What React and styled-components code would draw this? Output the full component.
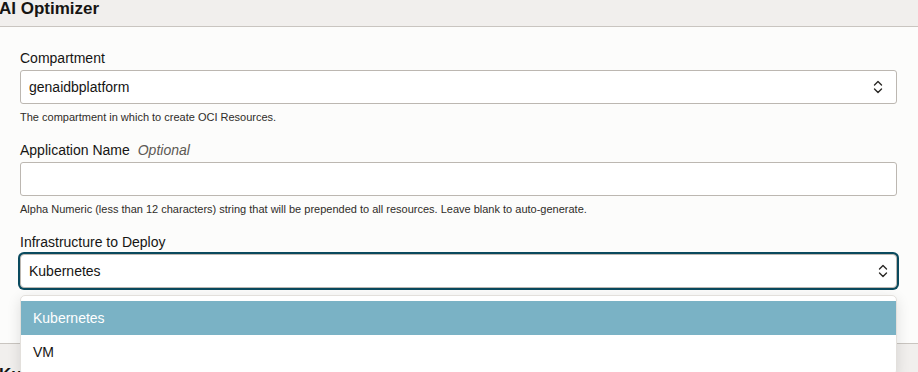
import React from 'react'
import styled, {createGlobalStyle} from 'styled-components'

const GlobalStyle = createGlobalStyle`
  html, body {
    margin: 0;
    padding: 0;
    background: #fcfcfb;
    font-family: "Liberation Sans", Arial, sans-serif;
    color: #161513;
    overflow: hidden;
  }
`

const Page = styled.div`
  width: 918px;
  height: 372px;
  overflow: hidden;
`

const SectionHeader = styled.div`
  height: 26px;
  background: #f1efed;
  border-bottom: 1px solid #c9c5c0;
  border-top: ${(p) => (p.top ? 'none' : '1px solid #c9c5c0')};
  padding-top: ${(p) => (p.top ? '0' : '22px')};
  box-sizing: content-box;
`

const SectionTitle = styled.h2`
  margin: 0 0 0 -1px;
  font-size: 17px;
  line-height: 17px;
  font-weight: bold;
`

const Form = styled.div`
  padding: 23px 21px 55px 20px;
  display: flex;
  flex-direction: column;
  gap: 18px;
`

const Field = styled.div`
  display: flex;
  flex-direction: column;
  position: relative;
`

const Label = styled.label`
  font-size: 14px;
  line-height: 17px;
  margin-bottom: 3px;
  display: flex;
  gap: 8px;
`

const Optional = styled.span`
  font-style: italic;
  color: #5c5954;
`

const Control = styled.div`
  position: relative;
  height: 34px;
  box-sizing: border-box;
  border: 1px solid #bcb7b1;
  background: #fff;
  display: flex;
  align-items: center;
  padding-left: 8px;
  font-size: 14px;
  box-shadow: ${(p) => (p.focused ? '0 0 0 2px #0a4a5e' : 'none')};
  border-radius: ${(p) => (p.focused ? '4px' : '3px')};
`

const Chevron = styled.svg`
  position: absolute;
  right: ${(p) => (p.focused ? '8px' : '13px')};
  top: 50%;
  transform: translateY(-50%);
`

const Help = styled.div`
  font-size: 11px;
  line-height: 13px;
  margin-top: 7px;
  color: #2f2c29;
`

const Menu = styled.ul`
  position: absolute;
  top: calc(100% + 8px);
  left: -1px;
  right: -1px;
  margin: 0;
  padding: 5px 0;
  list-style: none;
  background: #fff;
  border: 1px solid #e3e0dc;
  border-radius: 5px;
  box-shadow: 0 4px 14px rgba(0, 0, 0, 0.12);
  z-index: 2;
`

const Option = styled.li`
  height: 34px;
  display: flex;
  align-items: center;
  padding-left: 12px;
  font-size: 14px;
  background: ${(p) => (p.active ? '#7ab2c5' : 'transparent')};
  color: ${(p) => (p.active ? '#fff' : '#161513')};
`

const UpDown = ({focused}) => (
  <Chevron focused={focused} width="10" height="14" viewBox="0 0 10 14">
    <path
      d="M1.5 5 L5 1.5 L8.5 5 M1.5 9 L5 12.5 L8.5 9"
      fill="none"
      stroke="#2b2926"
      strokeWidth="1.4"
      strokeLinecap="round"
      strokeLinejoin="round"
    />
  </Chevron>
)

const App = () => {
  const options = ['Kubernetes', 'VM']
  return (
    <Page>
      <GlobalStyle />
      <SectionHeader top>
        <SectionTitle>AI Optimizer</SectionTitle>
      </SectionHeader>
      <Form>
        <Field>
          <Label>Compartment</Label>
          <Control>
            genaidbplatform
            <UpDown />
          </Control>
          <Help>The compartment in which to create OCI Resources.</Help>
        </Field>
        <Field>
          <Label>
            Application Name <Optional>Optional</Optional>
          </Label>
          <Control />
          <Help>
            Alpha Numeric (less than 12 characters) string that will be
            prepended to all resources. Leave blank to auto-generate.
          </Help>
        </Field>
        <Field>
          <Label>Infrastructure to Deploy</Label>
          <Control focused>
            Kubernetes
            <UpDown focused />
            <Menu>
              {options.map((opt, idx) => (
                <Option key={opt} active={idx === 0}>
                  {opt}
                </Option>
              ))}
            </Menu>
          </Control>
        </Field>
      </Form>
      <SectionHeader>
        <SectionTitle>Kubernetes</SectionTitle>
      </SectionHeader>
    </Page>
  )
}

export default App
